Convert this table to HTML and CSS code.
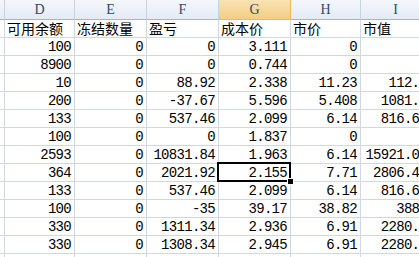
FILE: index.html
```html
<!DOCTYPE html>
<html>
<head>
<meta charset="utf-8">
<link rel="stylesheet" href="styles.css">
</head>
<body>
<div class="sheet">
  <div class="hd"></div><div class="hd">D</div><div class="hd">E</div><div class="hd">F</div><div class="hd hd-sel">G</div><div class="hd">H</div><div class="hd">I</div>

  <div class="c"></div><div class="c t">可用余额</div><div class="c t">冻结数量</div><div class="c t">盈亏</div><div class="c t">成本价</div><div class="c t">市价</div><div class="c t">市值</div>

  <div class="c"></div><div class="c">100</div><div class="c">0</div><div class="c">0</div><div class="c">3.111</div><div class="c">0</div><div class="c"></div>
  <div class="c"></div><div class="c">8900</div><div class="c">0</div><div class="c">0</div><div class="c">0.744</div><div class="c">0</div><div class="c"></div>
  <div class="c"></div><div class="c">10</div><div class="c">0</div><div class="c">88.92</div><div class="c">2.338</div><div class="c">11.23</div><div class="c">112.3</div>
  <div class="c"></div><div class="c">200</div><div class="c">0</div><div class="c">-37.67</div><div class="c">5.596</div><div class="c">5.408</div><div class="c">1081.6</div>
  <div class="c"></div><div class="c">133</div><div class="c">0</div><div class="c">537.46</div><div class="c">2.099</div><div class="c">6.14</div><div class="c">816.62</div>
  <div class="c"></div><div class="c">100</div><div class="c">0</div><div class="c">0</div><div class="c">1.837</div><div class="c">0</div><div class="c"></div>
  <div class="c"></div><div class="c">2593</div><div class="c">0</div><div class="c">10831.84</div><div class="c">1.963</div><div class="c">6.14</div><div class="c">15921.02</div>
  <div class="c"></div><div class="c">364</div><div class="c">0</div><div class="c">2021.92</div><div class="c sel">2.155</div><div class="c">7.71</div><div class="c">2806.44</div>
  <div class="c"></div><div class="c">133</div><div class="c">0</div><div class="c">537.46</div><div class="c">2.099</div><div class="c">6.14</div><div class="c">816.62</div>
  <div class="c"></div><div class="c">100</div><div class="c">0</div><div class="c">-35</div><div class="c">39.17</div><div class="c">38.82</div><div class="c">3882</div>
  <div class="c"></div><div class="c">330</div><div class="c">0</div><div class="c">1311.34</div><div class="c">2.936</div><div class="c">6.91</div><div class="c">2280.3</div>
  <div class="c"></div><div class="c">330</div><div class="c">0</div><div class="c">1308.34</div><div class="c">2.945</div><div class="c">6.91</div><div class="c">2280.3</div>
  <div class="c"></div><div class="c">330</div><div class="c">0</div><div class="c">1308.34</div><div class="c">2.945</div><div class="c">6.91</div><div class="c">2280.3</div>
</div>
</body>
</html>
```
FILE: styles.css
```css
html, body {
  margin: 0;
  padding: 0;
  background: #ffffff;
  overflow: hidden;
  width: 419px;
  height: 257px;
}

.sheet {
  display: grid;
  grid-template-columns: 5px 70px 72px 72px 72px 70px 70px;
  grid-template-rows: 20px;
  grid-auto-rows: 18px;
  width: 431px;
}

.hd {
  box-sizing: border-box;
  border-right: 1px solid #c5d3e3;
  border-bottom: 1px solid #9eb6ce;
  background: linear-gradient(#f4f7fb, #e4ebf5);
  color: #304a68;
  font-family: "Liberation Serif", serif;
  font-size: 14px;
  line-height: 19px;
  text-align: center;
}

.hd-sel {
  background: linear-gradient(#fae2b3, #f5cd84);
  border-right-color: #f1b75a;
  border-bottom-color: #f1b75a;
}

.c {
  box-sizing: border-box;
  border-right: 1px solid #d0d7e5;
  border-bottom: 1px solid #d0d7e5;
  font-family: "Liberation Mono", monospace;
  font-size: 14px;
  letter-spacing: -0.7px;
  line-height: 18px;
  text-align: right;
  padding-right: 3px;
  color: #000;
  white-space: nowrap;
  overflow: visible;
}

.t {
  font-family: "Noto Sans CJK SC", sans-serif;
  letter-spacing: 0;
  text-align: left;
  padding-left: 2px;
  line-height: 17px;
}

.sel {
  position: relative;
}

.sel::after {
  content: "";
  position: absolute;
  left: -2px;
  top: -2px;
  right: -1px;
  bottom: -1px;
  border: 2px solid #000;
}

.sel::before {
  content: "";
  position: absolute;
  right: -4px;
  bottom: -4px;
  width: 5px;
  height: 5px;
  background: #000;
  border: 1px solid #fff;
  z-index: 1;
}
```
